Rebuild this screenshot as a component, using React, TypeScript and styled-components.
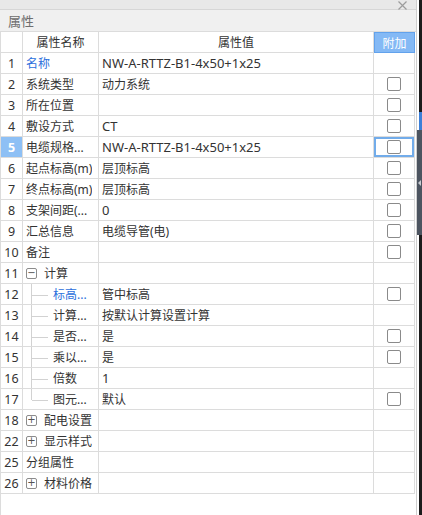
import React from 'react';
import styled, { createGlobalStyle, css } from 'styled-components';

const GlobalStyle = createGlobalStyle`
  html, body {
    margin: 0;
    padding: 0;
    background: #ffffff;
  }
  body {
    font-family: "Noto Sans", "Noto Sans CJK SC", sans-serif;
    font-size: 12px;
    color: #333333;
  }
`;

interface IRow {
  n: string;
  name: string;
  value?: string;
  latin?: boolean;
  blue?: boolean;
  check?: boolean;
  selected?: boolean;
  child?: boolean;
  last?: boolean;
  expander?: 'plus' | 'minus';
}

const NW = 'NW-A-RTTZ-B1-4x50+1x25';

const rows: IRow[] = [
  { n: '1', name: '名称', blue: true, value: NW, latin: true },
  { n: '2', name: '系统类型', value: '动力系统', check: true },
  { n: '3', name: '所在位置', check: true },
  { n: '4', name: '敷设方式', value: 'CT', latin: true, check: true },
  { n: '5', name: '电缆规格...', value: NW, latin: true, check: true, selected: true },
  { n: '6', name: '起点标高(m)', value: '层顶标高', check: true },
  { n: '7', name: '终点标高(m)', value: '层顶标高', check: true },
  { n: '8', name: '支架间距(...', value: '0', latin: true, check: true },
  { n: '9', name: '汇总信息', value: '电缆导管(电)', check: true },
  { n: '10', name: '备注', check: true },
  { n: '11', name: '计算', expander: 'minus' },
  { n: '12', name: '标高...', blue: true, child: true, value: '管中标高', check: true },
  { n: '13', name: '计算...', child: true, value: '按默认计算设置计算' },
  { n: '14', name: '是否...', child: true, value: '是', check: true },
  { n: '15', name: '乘以...', child: true, value: '是', check: true },
  { n: '16', name: '倍数', child: true, value: '1', latin: true },
  { n: '17', name: '图元...', child: true, last: true, value: '默认', check: true },
  { n: '18', name: '配电设置', expander: 'plus' },
  { n: '22', name: '显示样式', expander: 'plus' },
  { n: '25', name: '分组属性' },
  { n: '26', name: '材料价格', expander: 'plus' },
];

export default function App() {
  return (
    <>
      <GlobalStyle />
      <Screen>
        <Panel>
          <TopStrip>
            <CloseIcon width="9" height="9" viewBox="0 0 9 9">
              <path d="M0.5 0.5 L8.5 8.5 M8.5 0.5 L0.5 8.5" stroke="#9c9c9c" strokeWidth="1.2" />
            </CloseIcon>
          </TopStrip>
          <TitleBar>属性</TitleBar>
          <Grid>
            <Row>
              <IndexCell />
              <HeaderCell>属性名称</HeaderCell>
              <HeaderCell>属性值</HeaderCell>
              <ExtraHeader>附加</ExtraHeader>
            </Row>
            {rows.map(r => (
              <Row key={r.n}>
                <IndexCell $selected={r.selected}>{r.n}</IndexCell>
                <NameCell $blue={r.blue}>
                  {r.child && <Guide $last={r.last} />}
                  {r.expander && <Expander>{r.expander === 'plus' ? '+' : '−'}</Expander>}
                  <NameText>{r.name}</NameText>
                </NameCell>
                <ValueCell $latin={r.latin}>{r.value}</ValueCell>
                <ExtraCell $selected={r.selected}>{r.check && <Check />}</ExtraCell>
              </Row>
            ))}
            <Filler />
          </Grid>
        </Panel>
        <Strip>
          <StripPart $kind="dark" style={{ height: 112 }} />
          <StripPart $kind="blue" style={{ height: 18 }} />
          <StripPart $kind="tab" style={{ height: 105 }}>
            <Arrow />
          </StripPart>
          <StripPart $kind="dark" style={{ flex: 1 }} />
        </Strip>
      </Screen>
    </>
  );
}

const Screen = styled.div`
  display: flex;
  width: 422px;
  height: 515px;
  overflow: hidden;
`;

const Panel = styled.div`
  width: 417px;
  display: flex;
  flex-direction: column;
  border-right: 1px solid #cfcfcf;
  box-sizing: border-box;
`;

const TopStrip = styled.div`
  height: 10px;
  flex: none;
  background: #e8e8e8;
  border-bottom: 1px solid #d6d6d6;
  box-sizing: border-box;
  display: flex;
  justify-content: flex-end;
  align-items: center;
  padding-right: 9px;
`;

const CloseIcon = styled.svg`
  display: block;
  margin-top: 1px;
`;

const TitleBar = styled.div`
  height: 22px;
  flex: none;
  background: #f0f0f0;
  border-bottom: 1px solid #dcdcdc;
  box-sizing: border-box;
  display: flex;
  align-items: center;
  padding-left: 8px;
  font-size: 13px;
  color: #6e6e6e;
`;

const Grid = styled.div`
  flex: 1;
  display: flex;
  flex-direction: column;
  border-left: 1px solid #dcdcdc;
  width: 415px;
  box-sizing: border-box;
`;

const Row = styled.div`
  display: grid;
  grid-template-columns: 22px 76px 275px 41px;
  height: 21px;
  flex: none;
`;

const cellBase = css`
  box-sizing: border-box;
  border-right: 1px solid #dcdcdc;
  border-bottom: 1px solid #dcdcdc;
  display: flex;
  align-items: center;
  white-space: nowrap;
  overflow: hidden;
  min-width: 0;
`;

const IndexCell = styled.div<{ $selected?: boolean }>`
  ${cellBase};
  justify-content: center;
  font-size: 12.5px;
  color: ${p => (p.$selected ? '#ffffff' : '#333333')};
  background: ${p => (p.$selected ? '#8ec0f5' : 'transparent')};
  font-weight: ${p => (p.$selected ? 700 : 400)};
`;

const HeaderCell = styled.div`
  ${cellBase};
  justify-content: center;
  color: #333333;
`;

const ExtraHeader = styled.div`
  ${cellBase};
  justify-content: center;
  background: #84b9f5;
  border: 1px solid #62a2ec;
  color: #ffffff;
`;

const NameCell = styled.div<{ $blue?: boolean }>`
  ${cellBase};
  padding-left: 3px;
  color: ${p => (p.$blue ? '#2c6fdc' : '#333333')};
`;

const NameText = styled.span`
  overflow: hidden;
`;

const Guide = styled.span<{ $last?: boolean }>`
  position: relative;
  flex: none;
  width: 27px;
  align-self: stretch;
  margin-bottom: -1px;

  &::before {
    content: '';
    position: absolute;
    left: 5px;
    top: 0;
    height: ${p => (p.$last ? '50%' : '100%')};
    border-left: 1px solid #d2d2d2;
  }
  &::after {
    content: '';
    position: absolute;
    left: 6px;
    width: 16px;
    top: 50%;
    border-top: 1px solid #d2d2d2;
  }
`;

const Expander = styled.span`
  flex: none;
  width: 11px;
  height: 11px;
  box-sizing: border-box;
  border: 1px solid #8c8c8c;
  border-radius: 2px;
  margin-right: 7px;
  display: flex;
  align-items: center;
  justify-content: center;
  font-size: 10px;
  line-height: 1;
  color: #555555;
  font-family: "DejaVu Sans", sans-serif;
`;

const ValueCell = styled.div<{ $latin?: boolean }>`
  ${cellBase};
  padding-left: 3px;
  font-size: ${p => (p.$latin ? '13px' : '12px')};
  color: #333333;
`;

const ExtraCell = styled.div<{ $selected?: boolean }>`
  ${cellBase};
  justify-content: center;
  ${p =>
    p.$selected &&
    css`
      box-shadow: inset 0 0 0 2px #72acea;
    `}
`;

const Check = styled.span`
  width: 14px;
  height: 14px;
  box-sizing: border-box;
  border: 1px solid #8a8a8a;
  border-radius: 2px;
  background: #ffffff;
`;

const Filler = styled.div`
  flex: 1;
`;

const Strip = styled.div`
  width: 5px;
  display: flex;
  flex-direction: column;
`;

const StripPart = styled.div<{ $kind: 'dark' | 'blue' | 'tab' }>`
  flex: none;
  display: flex;
  align-items: center;
  justify-content: center;
  ${p =>
    p.$kind === 'dark' &&
    css`
      background: linear-gradient(to right, #ffffff 0 2px, #1c1c1c 2px);
    `}
  ${p =>
    p.$kind === 'blue' &&
    css`
      background: linear-gradient(to right, #ffffff 0 2px, #3c7fd8 2px);
    `}
  ${p =>
    p.$kind === 'tab' &&
    css`
      background: #4c5460;
    `}
`;

const Arrow = styled.span`
  width: 0;
  height: 0;
  border-top: 3px solid transparent;
  border-bottom: 3px solid transparent;
  border-right: 3px solid #c8ccd2;
`;
